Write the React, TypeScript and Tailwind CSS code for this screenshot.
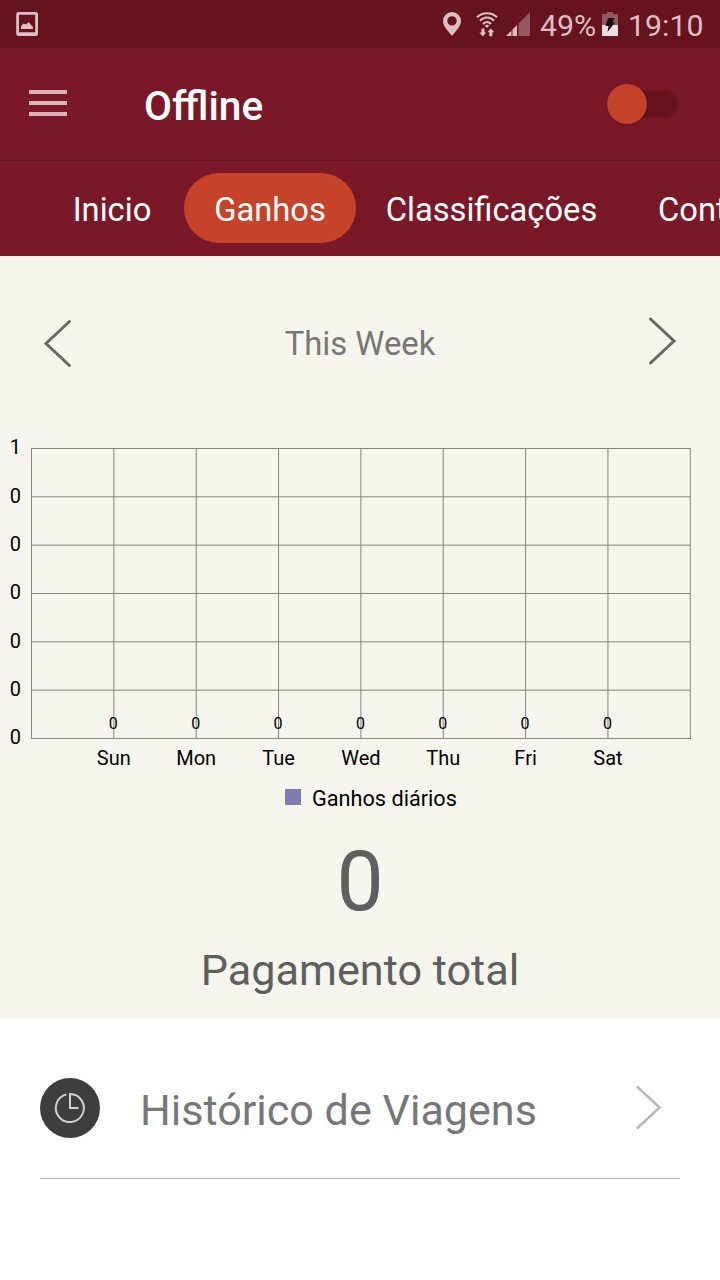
import React from "react";

const days = ["Sun", "Mon", "Tue", "Wed", "Thu", "Fri", "Sat"];
const yLabels = ["1", "0", "0", "0", "0", "0", "0"];

function StatusBar() {
  return (
    <div className="flex h-12 shrink-0 items-center bg-[#66131f] pr-[17px] pl-4 text-[#dcbfc3]">
      <svg width="22" height="24" viewBox="0 0 22 24" fill="none">
        <path
          fillRule="evenodd"
          d="M2.5 0h17A2.3 2.3 0 0 1 22 2.3v19.4a2.3 2.3 0 0 1-2.3 2.3H2.5A2.3 2.3 0 0 1 .2 21.700V2.300A2.300 2.300 0 0 1 2.500 0zM3 2.700v17.500h16.200V2.700z"
          fill="currentColor"
        />
        <path d="M5 17v-2.500l2.500-3 2.500 1 2.700-2.500 2.300 3 2 1.700V17z" fill="currentColor" />
      </svg>
      <div className="ml-auto flex items-center">
        <svg width="18" height="24" viewBox="0 0 18 24" fill="none">
          <path
            fillRule="evenodd"
            d="M9 0a9 9 0 0 1 9 9c0 4.500-4 9-9 15C4 18 0 13.500 0 9a9 9 0 0 1 9-9zm0 4.200a4.700 4.700 0 1 0 0 9.400 4.700 4.700 0 0 0 0-9.400z"
            fill="currentColor"
          />
        </svg>
        <svg className="ml-[14px]" width="24" height="26" viewBox="0 0 24 26" fill="none">
          <g stroke="currentColor" strokeWidth="2">
            <path d="M2 6.300C7.500.800 16.500.800 22 6.300" />
            <path d="M5 9.700c4-4.300 10-4.300 14 0" />
            <path d="M8 13c2.400-2.600 5.600-2.600 8 0" />
          </g>
          <path d="M9.700 14.800c1.400-1.300 3.200-1.300 4.600 0L12 17z" fill="currentColor" />
          <path d="M6.500 17.500h3v4h1.700l-3.400 4-3.400-4h2.100zM14.300 25.200h3v-4h1.900l-3.400-4-3.400 4h1.900z" fill="currentColor" />
        </svg>
        <svg className="ml-[7px]" width="24" height="24" viewBox="0 0 24 24">
          <path d="M24 0v24H12.500V11.500z" fill="#945660" />
          <path d="M5.500 18.500V24H0zM11 13v11H6.500v-6.500z" fill="currentColor" />
        </svg>
        <span className="ml-[10px] w-[56px] pt-[3px] text-[30.300px] leading-[45px] whitespace-nowrap">49%</span>
        <svg className="ml-[6px]" width="16" height="24" viewBox="0 0 16 24">
          <path d="M5 0h6v2h5v11H0V2h5z" fill="#945660" />
          <path d="M0 13h16v11H0z" fill="#f0dfe1" />
          <path d="M6 6h6.500l-2 4.500H13L5.500 20l1-6H3.500z" fill="#111" />
        </svg>
        <span className="ml-[10px] w-[75px] pt-[3px] text-[30.300px] leading-[45px] whitespace-nowrap">19:10</span>
      </div>
    </div>
  );
}

function Header() {
  return (
    <header className="flex h-[113px] shrink-0 items-center border-b border-[#64121e] pr-[42px] pl-[29px]">
      <button className="flex w-[38px] flex-col gap-[7px] pb-[3px]" aria-label="Menu">
        <span className="h-1 bg-[#dcb5bb]" />
        <span className="h-1 bg-[#dcb5bb]" />
        <span className="h-1 bg-[#dcb5bb]" />
      </button>
      <h1 className="ml-[77px] pt-1 text-[40.700px] leading-[48px] font-medium text-white">Offline</h1>
      <button className="mb-px ml-auto flex h-7 w-[71px] items-center rounded-full bg-[#66131f]" aria-label="Online">
        <span className="size-10 shrink-0 rounded-full bg-[#c44229] shadow-[0_1px_3px_rgba(0,0,0,0.3)]" />
      </button>
    </header>
  );
}

function Tabs() {
  const base = "flex h-[70px] shrink-0 items-center pt-1.5 text-[32.700px] text-white";
  return (
    <nav className="flex h-[95px] shrink-0 overflow-hidden pt-3 pl-10">
      <button className={`${base} w-36 justify-center`}>Inicio</button>
      <button className={`${base} w-[172px] justify-center rounded-full bg-[#c6432a]`}>Ganhos</button>
      <button className={`${base} w-[271px] justify-center`}>Classificações</button>
      <button className={`${base} pl-[31px]`}>Conta</button>
    </nav>
  );
}

function Chart() {
  const x = (i: number) => 31.5 + i * 82.35;
  const y = (i: number) => 28.5 + i * 48.33;
  return (
    <svg className="block shrink-0" width="720" height="400" viewBox="0 0 720 400" fontSize="20" fill="#000">
      <g stroke="#858581" strokeWidth="1">
        {yLabels.map((_, i) => (
          <line key={i} x1="31" x2="691" y1={y(i)} y2={y(i)} />
        ))}
        {[0, ...days.map((_, i) => i + 1), 8].map((i) => (
          <line key={i} x1={x(i)} x2={x(i)} y1="28" y2="319" />
        ))}
      </g>
      {yLabels.map((v, i) => (
        <text key={i} x="21" y={y(i) + 5.7} textAnchor="end">
          {v}
        </text>
      ))}
      {days.map((d, i) => (
        <g key={d} textAnchor="middle">
          <text x={x(i + 1) - 0.5} y="309" fontSize="16">
            0
          </text>
          <text x={x(i + 1)} y="345">
            {d}
          </text>
        </g>
      ))}
      <rect x="285" y="369" width="16" height="16" fill="#7f7bb3" />
      <text x="312" y="386" fontSize="21.700">
        Ganhos diários
      </text>
    </svg>
  );
}

export default function App() {
  return (
    <div className="flex h-[1280px] w-[720px] flex-col overflow-hidden bg-white font-['Roboto',sans-serif]">
      <StatusBar />
      <div className="flex flex-col bg-[#7a1828]">
        <Header />
        <Tabs />
      </div>
      <main className="flex h-[762px] shrink-0 flex-col bg-[#f6f5ee]">
        <div className="flex h-[164px] shrink-0 items-center justify-between px-[43px] pt-3">
          <svg className="mb-0.5" width="30" height="50" viewBox="0 0 30 50" fill="none" stroke="#696966" strokeWidth="3" strokeLinecap="round">
            <path d="M26.500 3.500 3 25.500 26.500 47.500" />
          </svg>
          <span className="text-[32.800px] leading-10 text-[#777774]">This Week</span>
          <svg className="mb-1" width="30" height="50" viewBox="0 0 30 50" fill="none" stroke="#696966" strokeWidth="3" strokeLinecap="round">
            <path d="M3.500 2 27 24 3.500 46" />
          </svg>
        </div>
        <Chart />
        <div className="flex flex-col items-center text-[#5f5f5f]">
          <span className="pt-3 text-[84px] leading-[100px]">0</span>
          <span className="pt-[11px] text-[43.200px] leading-[56px]">Pagamento total</span>
        </div>
      </main>
      <button className="mx-10 flex h-[161px] shrink-0 items-center border-b border-[#b3b3b3] pt-5 text-left">
        <svg width="60" height="60" viewBox="0 0 60 60" fill="none">
          <circle cx="30" cy="30" r="30" fill="#3e3e3e" />
          <path d="M26.500 16.400A14 14 0 1 0 30 16v14h8.500" stroke="#d0d0d0" strokeWidth="2" />
        </svg>
        <span className="ml-10 pt-1.5 text-[43.100px] leading-[56px] whitespace-nowrap text-[#777]">Histórico de Viagens</span>
        <svg className="mr-[18px] mb-[3px] ml-auto" width="28" height="46" viewBox="0 0 28 46" fill="none" stroke="#b8b8b8" strokeWidth="2.500" strokeLinecap="round">
          <path d="M3.500 3 25.500 23.500 3.500 44" />
        </svg>
      </button>
    </div>
  );
}
